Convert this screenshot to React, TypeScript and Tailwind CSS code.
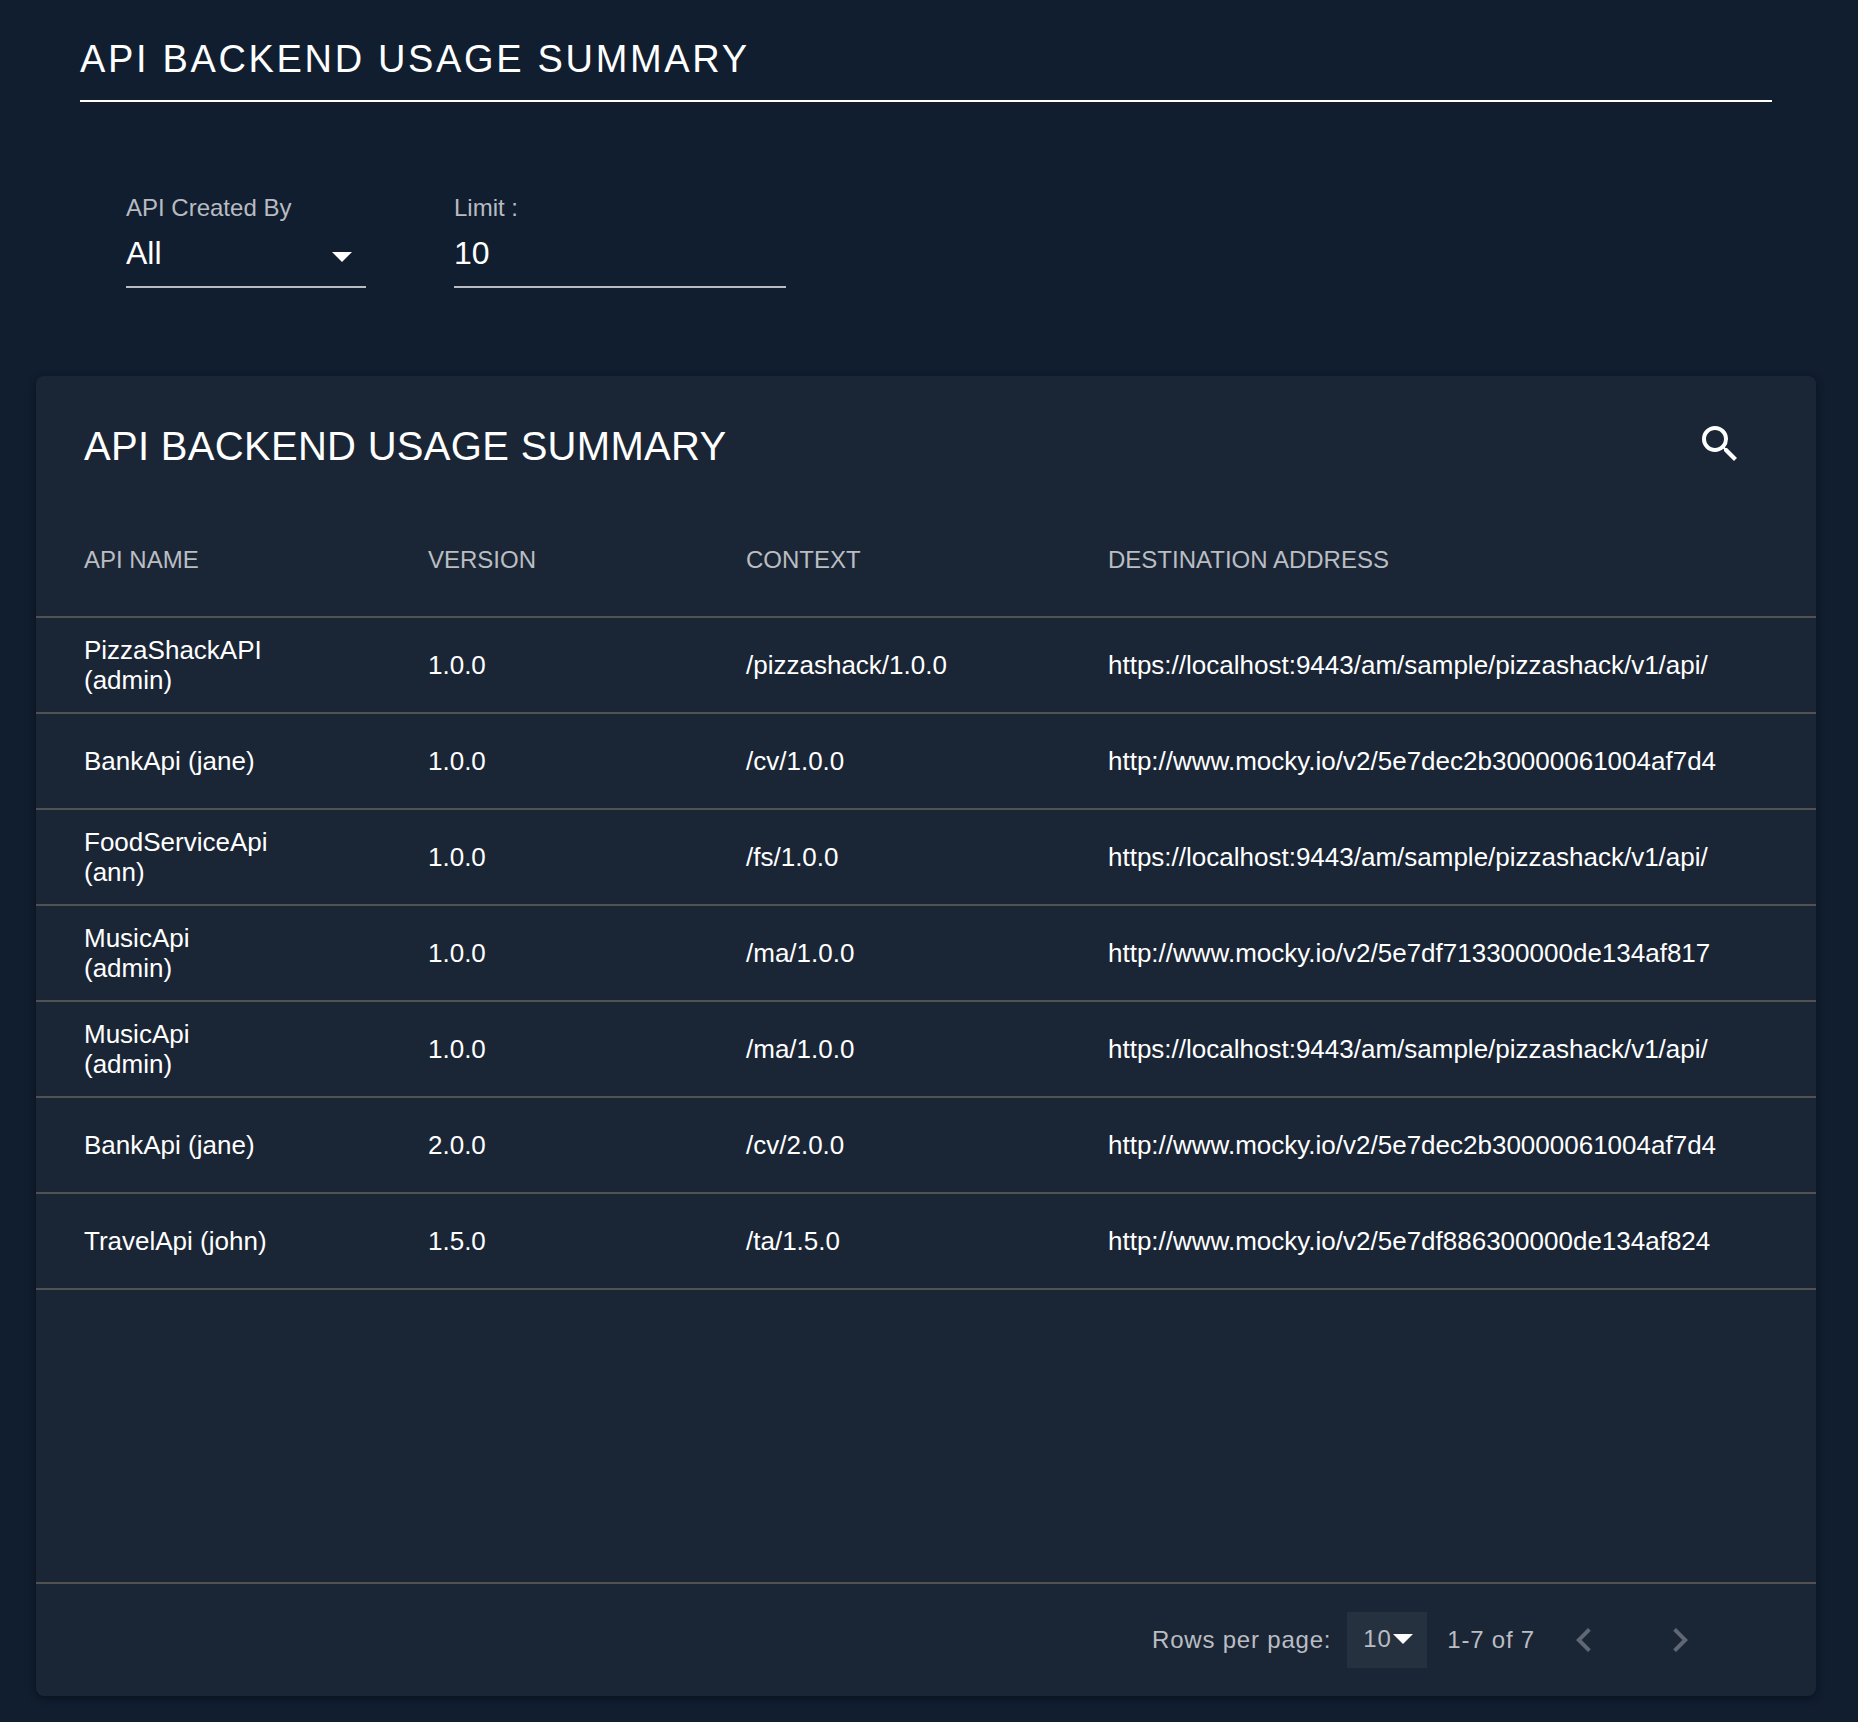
import { useState } from "react";
import { MdArrowDropDown, MdChevronLeft, MdChevronRight, MdSearch } from "react-icons/md";

type ApiRow = {
  name: string;
  version: string;
  context: string;
  destination: string;
};

const rows: ApiRow[] = [
  { name: "PizzaShackAPI (admin)", version: "1.0.0", context: "/pizzashack/1.0.0", destination: "https://localhost:9443/am/sample/pizzashack/v1/api/" },
  { name: "BankApi (jane)", version: "1.0.0", context: "/cv/1.0.0", destination: "http://www.mocky.io/v2/5e7dec2b30000061004af7d4" },
  { name: "FoodServiceApi (ann)", version: "1.0.0", context: "/fs/1.0.0", destination: "https://localhost:9443/am/sample/pizzashack/v1/api/" },
  { name: "MusicApi (admin)", version: "1.0.0", context: "/ma/1.0.0", destination: "http://www.mocky.io/v2/5e7df713300000de134af817" },
  { name: "MusicApi (admin)", version: "1.0.0", context: "/ma/1.0.0", destination: "https://localhost:9443/am/sample/pizzashack/v1/api/" },
  { name: "BankApi (jane)", version: "2.0.0", context: "/cv/2.0.0", destination: "http://www.mocky.io/v2/5e7dec2b30000061004af7d4" },
  { name: "TravelApi (john)", version: "1.5.0", context: "/ta/1.5.0", destination: "http://www.mocky.io/v2/5e7df886300000de134af824" },
];

function Filters() {
  const [creator, setCreator] = useState("All");
  const [limit, setLimit] = useState("10");
  return (
    <form className="flex gap-22 px-[90px] pt-[90px]">
      <div className="flex w-60 flex-col">
        <label htmlFor="creator" className="text-2xl leading-8 text-[#b8bbc1]">API Created By</label>
        <div className="relative mt-1.5 border-b-2 border-[#b8bbc1]">
          <select
            id="creator"
            value={creator}
            onChange={(e) => setCreator(e.target.value)}
            className="block h-14 w-full appearance-none bg-transparent pr-12 pb-2.5 text-[32px] leading-10 text-white outline-none"
          >
            <option>All</option>
          </select>
          <MdArrowDropDown className="pointer-events-none absolute top-0.5 right-0 size-12 text-white" />
        </div>
      </div>
      <div className="flex w-[332px] flex-col">
        <label htmlFor="limit" className="text-2xl leading-8 text-[#b8bbc1]">Limit :</label>
        <input
          id="limit"
          value={limit}
          onChange={(e) => setLimit(e.target.value)}
          className="mt-1.5 h-[58px] w-full border-b-2 border-[#b8bbc1] bg-transparent pb-2.5 text-[32px] leading-10 text-white outline-none"
        />
      </div>
    </form>
  );
}

function HeaderCell({ children, first }: { children: string; first?: boolean }) {
  return (
    <th
      scope="col"
      className={`h-[114px] border-b-2 border-[#515151] p-0 text-left text-2xl font-normal text-[#babdc2] ${first ? "pl-12" : ""}`}
    >
      {children}
    </th>
  );
}

function UsageTable() {
  return (
    <table className="w-full table-fixed border-separate border-spacing-0">
      <colgroup>
        <col className="w-[392px]" />
        <col className="w-[318px]" />
        <col className="w-[362px]" />
        <col />
      </colgroup>
      <thead>
        <tr>
          <HeaderCell first>API NAME</HeaderCell>
          <HeaderCell>VERSION</HeaderCell>
          <HeaderCell>CONTEXT</HeaderCell>
          <HeaderCell>DESTINATION ADDRESS</HeaderCell>
        </tr>
      </thead>
      <tbody className="text-[26px] leading-[30px] text-white">
        {rows.map((row, i) => (
          <tr key={i}>
            <td className="h-24 border-b-2 border-[#515151] py-0 pr-39 pl-12">{row.name}</td>
            <td className="border-b-2 border-[#515151] p-0">{row.version}</td>
            <td className="border-b-2 border-[#515151] p-0">{row.context}</td>
            <td className="border-b-2 border-[#515151] p-0">{row.destination}</td>
          </tr>
        ))}
        <tr>
          <td colSpan={4} className="h-[294px] border-b-2 border-[#515151] p-0" />
        </tr>
      </tbody>
    </table>
  );
}

function Pagination() {
  return (
    <div className="flex h-28 items-center justify-end pr-22 text-2xl tracking-[0.033em] text-[#babdc2]">
      <label htmlFor="per-page">Rows per page:</label>
      <div className="relative mr-5 ml-4 bg-[#263140]">
        <select
          id="per-page"
          defaultValue="10"
          className="block h-14 w-20 appearance-none bg-transparent pb-0.5 pl-4 outline-none"
        >
          <option>10</option>
        </select>
        <MdArrowDropDown className="pointer-events-none absolute top-0.5 right-0 size-12 text-white" />
      </div>
      <span className="pr-px">1-7 of 7</span>
      <button type="button" disabled aria-label="Previous page" className="flex size-24 items-center justify-center text-[#5f6872]">
        <MdChevronLeft className="size-12" />
      </button>
      <button type="button" disabled aria-label="Next page" className="flex size-24 items-center justify-center text-[#5f6872]">
        <MdChevronRight className="size-12" />
      </button>
    </div>
  );
}

export default function App() {
  return (
    <main className="min-h-screen bg-[#111e30] pr-[42px] pb-[26px] pl-9 font-['Liberation_Sans',Arial,sans-serif]">
      <header className="mx-11 border-b-2 border-white pt-[35px] pb-[17px]">
        <h1 className="text-[38px] leading-12 tracking-[0.07em] text-white">API BACKEND USAGE SUMMARY</h1>
      </header>
      <Filters />
      <section className="mt-22 rounded-lg bg-[#1a2636] shadow-[0_2px_6px_rgba(0,0,0,0.2),0_2px_8px_rgba(0,0,0,0.25)]">
        <div className="flex h-32 items-center justify-between pt-2 pr-12 pl-12">
          <h2 className="pt-[3px] text-[40px] leading-12 tracking-[0.0075em] text-white">API BACKEND USAGE SUMMARY</h2>
          <button type="button" aria-label="Search" className="flex size-24 items-center justify-center text-white">
            <MdSearch className="size-12" />
          </button>
        </div>
        <UsageTable />
        <Pagination />
      </section>
    </main>
  );
}
